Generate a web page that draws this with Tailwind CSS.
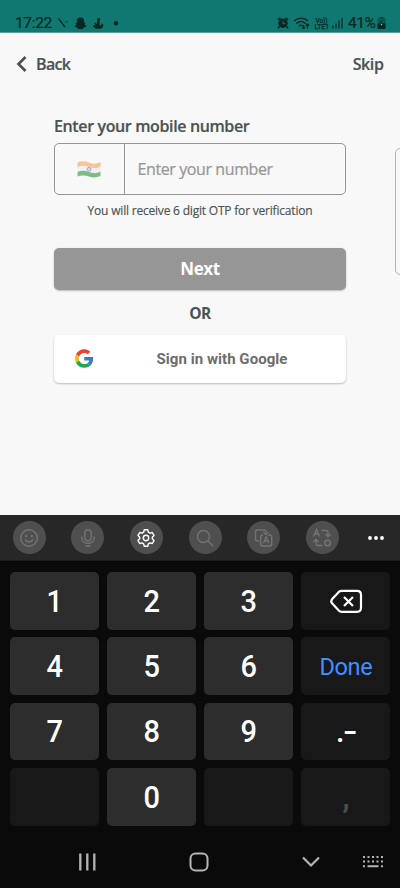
<!DOCTYPE html>
<html lang="en">
<head>
<meta charset="utf-8">
<meta name="viewport" content="width=device-width, initial-scale=1">
<title>Sign in</title>
<script src="https://cdn.jsdelivr.net/npm/@tailwindcss/browser@4"></script>
</head>
<body class="w-[400px] h-[888px] overflow-hidden flex flex-col bg-[#f8f8f8] font-['Open_Sans',sans-serif] text-[#4a5352]">
  <!-- Status bar -->
  <header class="h-[33px] shrink-0 bg-[#107870] border-b border-[#5aa09a] flex items-end justify-between pl-[15px] pr-[14px] text-[#062824] font-[Roboto,sans-serif]">
    <div class="flex items-center h-[17px]">
      <span class="w-[38px] text-[15.500px] leading-[17px] whitespace-nowrap tracking-[-0.350px] [-webkit-text-stroke:0.2px]">17:22</span>
      <svg class="w-[68px] h-[19px]" viewBox="0 0 68 19" fill="currentColor">
        <path d="M5.500 4.500 12 13" stroke="currentColor" stroke-width="1.300"/><path d="m12 8 3-.5" stroke="currentColor" stroke-width=".7"/>
        <path d="M27.500 3.500c2.500 0 3.700 1.600 3.700 3.800v1.500l1.500.5-1 1.300 1.800 2-2.500 1-1 1.200-2.500.4-2.500-.4-1-1.200-2.500-1 1.800-2-1-1.300 1.500-.5V7.300c0-2.200 1.200-3.800 3.700-3.800z"/>
        <circle cx="45.500" cy="5.200" r="1.500"/><path d="M44.200 6.500h2.600l-.4 5 1.600-.3.400-2 2 1.300-.5 2.500-2 1.800h-5l-2.800-2.300v-1.300l2.300.3-1.400-2.500 1.700-.5 1 2z"/>
        <circle cx="63" cy="9.300" r="2.200"/>
      </svg>
    </div>
    <div class="flex items-center h-[17px]">
      <svg class="w-[71px] h-[19px]" viewBox="0 0 71 19" fill="none" stroke="currentColor">
        <circle cx="6" cy="9.300" r="4.700" fill="currentColor" stroke="none"/><path d="m1 6 2.500-2M11 6 8.500 4M2.500 12.500 1 14.200M9.500 12.500l1.500 1.700" stroke-width="1.700"/><path d="M6 6.700v3h2.300" stroke="#107870" stroke-width="1"/>
        <path d="M17 7c4.500-3.700 10-3.700 14 0M19.200 9.700c3-2.700 6.600-2.700 9.600 0M21.700 12c1.500-1.200 2.800-1.200 4 0" stroke-width="1.400"/><path d="M26.500 11v3.500m-1.500-1.500 1.500 1.500 1.500-1.500M30.500 14.500V10m-1.700 1.700 1.700-1.700 1.700 1.700" stroke-width="1.300"/>
        <g fill="currentColor" stroke="currentColor" stroke-width=".25" font-family="Roboto" font-size="7"><text x="38.500" y="8.500" textLength="12" lengthAdjust="spacingAndGlyphs">Vo))</text><text x="37.500" y="14.800" textLength="14.500" lengthAdjust="spacingAndGlyphs">LTE1</text></g>
        <path d="M56 11.500v3M59 9.500v5M62 6.500v8M65 4v10.500" stroke-width="1.200"/>
      </svg>
      <span class="w-[29px] text-[15.500px] leading-[17px] whitespace-nowrap tracking-[-0.5px] [-webkit-text-stroke:0.2px]">41%</span>
      <svg class="w-[9px] h-[19px]" viewBox="0 0 9 19"><rect x=".5" y="4" width="8" height="11" rx="1.500" fill="#075850"/><path d="M2.500 4V3h4v1M.5 9.500h8V13.500q0 1.500-1.500 1.500H2Q.5 15 .5 13.500z" fill="#062824"/><path d="m5 5-2.500 5h1.800L4 14l2.500-5H4.800z" fill="#063c36"/><circle cx="4.500" cy="10.500" r=".7" fill="#9ccbc5"/></svg>
    </div>
  </header>

  <main class="h-[482px] shrink-0 relative overflow-hidden">
    <nav class="h-[62px] flex items-center justify-between pl-[16px] pr-[16.500px] text-[16px] font-semibold">
      <div class="flex items-center gap-[9px]">
        <svg class="w-[11px] h-[16px]" viewBox="0 0 11 16" fill="none" stroke="currentColor" stroke-width="2.700"><path d="M9.500 1 2.500 8l7 7"/></svg>
        <span class="tracking-[-0.65px] [-webkit-text-stroke:0.2px]">Back</span>
      </div>
      <span class="tracking-[-0.4px] [-webkit-text-stroke:0.2px]">Skip</span>
    </nav>
    <section class="w-[292px] ml-[54px] pt-[19px] flex flex-col">
      <label class="h-[29px] leading-[24px] text-[16px] font-semibold whitespace-nowrap tracking-[-0.37px] [-webkit-text-stroke:0.2px]">Enter your mobile number</label>
      <div class="h-[52px] flex border border-[#969696] rounded-[5px]">
        <div class="w-[70px] pr-[1px] border-r border-[#969696] flex items-center justify-center">
          <svg class="w-[24px] h-[18px]" viewBox="0 0 24 18">
            <path d="M.5 2.500q5.500-2.500 11.500 0t11.500-.5v5q-5.500 2.500-11.500.5T.5 7.500z" fill="#fbc393"/>
            <path d="M.5 7q5.500-2.500 11.500 0t11.500-.5v5q-5.500 2.500-11.500.5T.5 12z" fill="#f0f0f0"/>
            <path d="M.5 12q5.500-2.500 11.500 0t11.500-.5v4.500q-5.500 2.500-11.500.5T.5 16.500z" fill="#7dbd83"/>
            <circle cx="12" cy="9.300" r="1.900" fill="#dcdcf5" stroke="#9292d4" stroke-width=".8"/>
          </svg>
        </div>
        <div class="pl-[12.500px] flex items-center text-[16px] text-[#969696] whitespace-nowrap tracking-[-0.4px] [-webkit-text-stroke:0.2px]">Enter your number</div>
      </div>
      <p class="mt-[7px] h-[18px] text-[12px] leading-[18px] text-center whitespace-nowrap tracking-[-0.2px] [-webkit-text-stroke:0.15px]">You will receive 6 digit OTP for verification</p>
      <button class="mt-[28px] h-[42px] rounded-[5px] bg-[#969696] text-white text-[17px] font-bold tracking-[-0.4px] shadow-[0_1px_2px_rgba(0,0,0,0.25)]">Next</button>
      <div class="h-[45px] pt-[3px] flex items-center justify-center text-[15.500px] font-bold tracking-[-0.5px]">OR</div>
      <button class="h-[48px] rounded-[5px] bg-white shadow-[0_1px_2px_rgba(0,0,0,0.25)] flex items-center pl-[21px] text-[#6d6d6d] font-[Roboto,sans-serif] text-[15px] font-bold">
        <svg class="w-[18.500px] h-[19px] mb-[1px]" viewBox="0 0 48 48"><path fill="#ea4335" d="M24 9.500c3.540 0 6.710 1.220 9.210 3.600l6.850-6.850C35.900 2.380 30.470 0 24 0 14.620 0 6.510 5.380 2.560 13.220l7.980 6.190C12.430 13.720 17.740 9.500 24 9.500z"/><path fill="#4078c8" d="M46.980 24.550c0-1.570-.15-3.090-.38-4.550H24v9.020h12.940c-.58 2.960-2.260 5.480-4.780 7.180l7.730 6c4.510-4.180 7.090-10.360 7.090-17.650z"/><path fill="#fbbc05" d="M10.530 28.590a14.500 14.500 0 0 1 0-9.180l-7.980-6.190a24 24 0 0 0 0 21.560z"/><path fill="#22a851" d="M24 48c6.480 0 11.930-2.130 15.890-5.810l-7.730-6c-2.150 1.450-4.920 2.300-8.160 2.300-6.260 0-11.570-4.220-13.470-9.910l-7.980 6.190C6.510 42.620 14.620 48 24 48z"/></svg>
        <span class="ml-[63px] whitespace-nowrap tracking-[0.05px]">Sign in with Google</span>
      </button>
    </section>
    <!-- Next panel peeking in from the right edge -->
    <div class="absolute left-[395px] top-[115px] w-[40px] h-[127px] border border-[#b4b4b4] rounded-[5px]"></div>
  </main>

  <!-- Keyboard -->
  <section class="h-[373px] shrink-0 bg-[#0a0a0a] flex flex-col font-[Roboto,sans-serif] text-white">
    <div class="h-[46px] shrink-0 bg-[#272727] border-b border-[#1b1b1b] flex items-center pl-[12.700px] gap-[25.650px] text-[#747474]">
      <div class="size-[33px] rounded-full bg-[#4f4f4f] flex items-center justify-center"><svg class="size-[20px]" viewBox="0 0 20 20" fill="none" stroke="currentColor" stroke-width="1.400"><circle cx="10" cy="10" r="8.300"/><path d="M6 11.500q4 5 8 0"/><path d="M6.200 8h1.800M12 8h1.800" stroke-width="1.800"/></svg></div>
      <div class="size-[33px] rounded-full bg-[#4f4f4f] flex items-center justify-center"><svg class="size-[20px]" viewBox="0 0 20 20" fill="none" stroke="currentColor" stroke-width="1.400"><rect x="6.800" y="1.800" width="6.400" height="11" rx="3.200"/><path d="M3.800 8.500v1.300c0 7.300 12.400 7.300 12.400 0V8.500M7.500 18h5"/></svg></div>
      <div class="size-[33px] rounded-full bg-[#4f4f4f] flex items-center justify-center text-white"><svg class="size-[20px]" viewBox="0 0 20 20" fill="none" stroke="currentColor" stroke-width="1.400" stroke-linejoin="round"><path d="M8.300 1.800h3.400l.7 2.400 1.500.9 2.400-.6L18 7.400l-1.700 1.800v1.600l1.700 1.800-1.700 2.900-2.400-.6-1.500.9-.7 2.400H8.300l-.7-2.400-1.500-.9-2.400.6L2 12.600l1.700-1.800V9.200L2 7.400l1.700-2.900 2.400.6 1.500-.9z"/><circle cx="10" cy="10" r="2.700"/></svg></div>
      <div class="size-[33px] rounded-full bg-[#4f4f4f] flex items-center justify-center"><svg class="size-[20px]" viewBox="0 0 20 20" fill="none" stroke="currentColor" stroke-width="1.400"><circle cx="8.500" cy="8.500" r="6"/><path d="m13 13 5 5"/></svg></div>
      <div class="size-[33px] rounded-full bg-[#4f4f4f] flex items-center justify-center"><svg class="size-[20px]" viewBox="0 0 20 20" fill="none" stroke="currentColor" stroke-width="1.400"><path d="M5 13H3.500Q1.500 13 1.500 11V4q0-2 2-2H10q2 0 2 2M9 7H8.700Q6.700 7 6.700 9v7q0 2 2 2h7q2 0 2-2V9q0-2-2-2H14M9.500 4 12 6.500 14.500 4M9.500 15l2.700-6 2.700 6m-4.500-2h3.600"/></svg></div>
      <div class="size-[33px] rounded-full bg-[#4f4f4f] flex items-center justify-center"><svg class="size-[20px]" viewBox="0 0 20 20" fill="none" stroke="currentColor" stroke-width="1.400"><path d="m1.500 8.500 3-7 3 7M2.500 6h4M9.500 2.500H14q2 0 2 2v4M13.300 6l2.700 2.700L18.700 6M10.500 17.500H6q-2 0-2-2V12M1.300 14 4 11.300 6.700 14"/><circle cx="15.500" cy="15" r="2.800"/></svg></div>
      <svg class="w-[18px] h-[6px] ml-[2.500px]" viewBox="0 0 18 6" fill="white"><circle cx="3" cy="3" r="1.900"/><circle cx="9" cy="3" r="1.900"/><circle cx="15" cy="3" r="1.900"/></svg>
    </div>
    <div class="h-[265px] pt-[11px] px-[9.700px] grid grid-cols-[89px_89px_89px_89px] auto-rows-[57.500px] gap-x-[8.250px] gap-y-[7.900px] text-[30.500px] font-medium leading-none [&>div]:flex [&>div]:items-center [&>div]:justify-center [&>div]:rounded-[5px] [&>div]:pt-[2px]">
      <div class="bg-[#2d2d2d]"><span class="scale-x-[0.93]">1</span></div><div class="bg-[#2d2d2d]"><span class="scale-x-[0.95]">2</span></div><div class="bg-[#2d2d2d]"><span class="scale-x-[0.95]">3</span></div>
      <div class="bg-[#181818]"><svg class="w-[34px] h-[26px]" viewBox="0 0 34 26" fill="none" stroke="white" stroke-width="2.200" stroke-linejoin="round"><path d="M12.500 1.800H28q4 0 4 4v13q0 4-4 4H12.500q-1.500 0-2.500-1l-7-7.500q-1.500-2 0-4l7-7.500q1-1 2.500-1z"/><path d="m15 8 9 9m0-9-9 9"/></svg></div>
      <div class="bg-[#2d2d2d]"><span class="scale-x-[0.95]">4</span></div><div class="bg-[#2d2d2d]"><span class="scale-x-[0.95]">5</span></div><div class="bg-[#2d2d2d]"><span class="scale-x-[0.95]">6</span></div>
      <div class="bg-[#181818] text-[#3e91ff] text-[23.500px] font-normal tracking-[-0.3px]"><span class="pt-[2px]">Done</span></div>
      <div class="bg-[#2d2d2d]"><span class="scale-x-[0.95]">7</span></div><div class="bg-[#2d2d2d]"><span class="scale-x-[0.95]">8</span></div><div class="bg-[#2d2d2d]"><span class="scale-x-[0.95]">9</span></div>
      <div class="bg-[#181818]">.<span class="inline-block scale-x-[1.350] ml-[1px]">-</span></div>
      <div class="bg-[#181818]"></div><div class="bg-[#2d2d2d]"><span class="scale-x-[0.95]">0</span></div><div class="bg-[#181818]"></div>
      <div class="bg-[#181818] text-[#4b4b4b] font-bold">,</div>
    </div>
    <nav class="h-[62px] flex items-center pt-[10px] pl-[78px] text-[#b5b5b5]">
      <svg class="w-[19px] h-[18px]" viewBox="0 0 19 18" stroke="currentColor" stroke-width="2.300"><path d="M2.300 .5v17M9.300 .5v17M16.300 .5v17"/></svg>
      <svg class="w-[20px] h-[20px] ml-[92px]" viewBox="0 0 20 20" fill="none" stroke="currentColor" stroke-width="2"><rect x="1.500" y="1.500" width="17" height="17" rx="5"/></svg>
      <svg class="w-[18px] h-[12px] ml-[93px]" viewBox="0 0 18 12" fill="none" stroke="currentColor" stroke-width="2.200"><path d="m1 1.500 8 8 8-8"/></svg>
      <svg class="w-[22px] h-[14px] ml-[42px]" viewBox="0 0 22 14" stroke="currentColor" stroke-width="2"><path d="M1 2h21M1 6.500h21" stroke-dasharray="2 2.500"/><path d="M1 11.300h2M5.500 11.300h11M19 11.300h2"/></svg>
    </nav>
  </section>
</body>
</html>
